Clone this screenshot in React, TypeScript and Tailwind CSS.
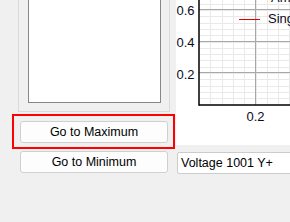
import React from "react";

function Chart() {
  const axisX = 23;
  const axisY = 105;
  const minorV: number[] = [];
  for (let k = 1; k < 9; k++) minorV.push(Math.round(axisX + 11.3 * k) + 0.5);
  const minorH: number[] = [];
  for (let k = 1; k < 17; k++) {
    const y = Math.round(104.5 - 6.3 * k) + 0.5;
    if (y > 0) minorH.push(y);
  }
  const majorH = [9.5, 41.5, 72.5];
  const majorV = [79.5];
  const font = "'Liberation Sans', Arial, sans-serif";
  return (
    <svg width="114" height="145" viewBox="0 0 114 145" className="block">
      <g stroke="#e9e9e9" strokeWidth="1">
        {minorV.map((x) => (
          <line key={"v" + x} x1={x} y1={0} x2={x} y2={axisY} />
        ))}
        {minorH.map((y) => (
          <line key={"h" + y} x1={axisX} y1={y} x2={114} y2={y} />
        ))}
      </g>
      <g stroke="#a8a8a8" strokeWidth="1">
        {majorH.map((y) => (
          <line key={"H" + y} x1={axisX} y1={y} x2={114} y2={y} />
        ))}
        {majorV.map((x) => (
          <line key={"V" + x} x1={x} y1={0} x2={x} y2={axisY} />
        ))}
      </g>
      <line x1={axisX} y1={0} x2={axisX} y2={axisY + 0.75} stroke="#000" strokeWidth="1.5" />
      <line x1={axisX} y1={axisY} x2={114} y2={axisY} stroke="#000" strokeWidth="1.5" />
      <g fontFamily={font} fontSize="13" fill="#0a0a1e">
        <text x={18.5} y={15} textAnchor="end">0.6</text>
        <text x={18.5} y={47} textAnchor="end">0.4</text>
        <text x={18.5} y={78.5} textAnchor="end">0.2</text>
        <text x={79.5} y={121} textAnchor="middle">0.2</text>
        <text x={95} y={1.5}>Amplitude</text>
        <text x={92} y={23}>Single</text>
      </g>
      <line x1={63} y1={19.5} x2={84} y2={19.5} stroke="#e00000" strokeWidth="1" />
    </svg>
  );
}

export default function App() {
  return (
    <div className="w-[290px] h-[222px] bg-[#f0f0f0] overflow-hidden flex font-['Liberation_Sans',Arial,sans-serif] text-[12.5px] text-[#000]">
      <div className="w-[176px] shrink-0 flex flex-col">
        <div className="ml-[18px] w-[152px] h-[112px] border-x border-b border-[#dadada] pl-[9px] pr-[8px] pb-[8px] flex flex-col">
          <div className="flex-1 bg-white border-x border-b border-[#828790]" />
        </div>
        <div className="mt-[2px] ml-[12px] w-[163px] h-[35px] border-2 border-[#ff0000] pt-[5px] pl-[6px]">
          <button className="w-[148px] h-[22px] rounded-[3px] border border-[#d0d0d0] bg-[#fdfdfd] flex items-center justify-center leading-none">
            Go to Maximum
          </button>
        </div>
        <button className="mt-[2px] ml-[20px] w-[148px] h-[22px] rounded-[3px] border border-[#d0d0d0] bg-[#fdfdfd] flex items-center justify-center leading-none">
          Go to Minimum
        </button>
      </div>
      <div className="flex-1 min-w-0 flex flex-col">
        <div className="h-[145px] bg-white overflow-hidden">
          <Chart />
        </div>
        <div className="mt-[7px] ml-[1px] w-[140px] h-[22px] rounded-[2px] border border-[#cccccc] bg-white flex items-center pl-[3px] leading-none whitespace-nowrap">
          Voltage 1001 Y+
        </div>
      </div>
    </div>
  );
}
